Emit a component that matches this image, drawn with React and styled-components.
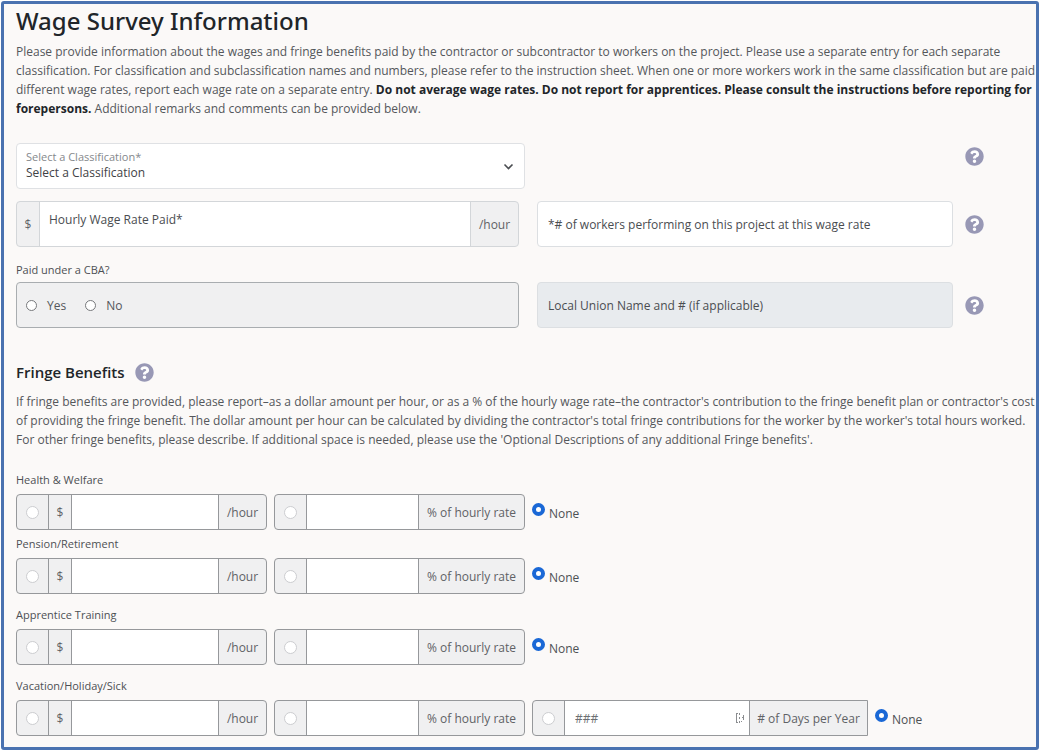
import React, { useState } from "react";
import styled, { createGlobalStyle } from "styled-components";
import { FaQuestionCircle } from "react-icons/fa";

const GlobalStyle = createGlobalStyle`
  * {
    box-sizing: border-box;
  }
  body {
    margin: 0;
    background: #fff;
    color: #54575b;
    font-family: "Open Sans", "Noto Sans", sans-serif;
    font-size: 12px;
    line-height: 19px;
  }
  input, select, button {
    font: inherit;
    color: inherit;
  }
`;

const Page = styled.main`
  margin: 1px;
  padding: 1px 3px 11px 12px;
  border: 3px solid #4a72b0;
  border-radius: 3px;
  background: #fbf9f8;
`;

const Title = styled.h1`
  margin: 0;
  color: #212529;
  font-family: "Noto Sans", sans-serif;
  font-size: 24px;
  font-weight: 500;
  line-height: 32px;
`;

const Text = styled.p`
  margin: ${(props) => (props.$spaced ? "9px" : "5px")} -4px 0 0;

  b {
    color: #212529;
  }
`;

const Section = styled.div`
  display: flex;
  flex-direction: column;
  margin-top: 25px;
`;

const FormRow = styled.div`
  display: grid;
  grid-template-columns: ${(props) => (props.$wide ? "509fr 490fr" : "503fr 496fr")};
  gap: 18px;
  align-items: ${(props) => (props.$wide ? "start" : "center")};
  margin-bottom: 12px;
`;

const RightCell = styled.div`
  display: flex;
  align-items: center;
  justify-content: flex-end;
  gap: 12px;
  padding-top: ${(props) => (props.$top ? "4px" : "0")};
`;

const HelpSlot = styled.div`
  display: flex;
  flex: none;
  width: 68px;
`;

const HelpButton = styled.button`
  display: flex;
  padding: 0;
  border: 0;
  border-radius: 50%;
  background: #fff;
  color: #9898b5;
  font-size: 19px;
  cursor: pointer;
`;

const SelectBox = styled.div`
  position: relative;
  display: flex;
`;

const FloatingLabel = styled.label`
  position: absolute;
  top: 6px;
  left: 10px;
  color: #85888c;
  font-size: 11px;
  line-height: 16px;
`;

const Select = styled.select`
  width: 100%;
  height: 46px;
  padding: 13px 30px 0 9px;
  border: 1px solid #dfe1e4;
  border-radius: 4px;
  background: #fff;
  color: #3f4246;
  appearance: none;
`;

const Chevron = styled.svg`
  position: absolute;
  top: 18px;
  right: 11px;
  pointer-events: none;
`;

const TextInput = styled.input`
  flex: 1;
  min-width: 0;
  height: 46px;
  padding: 0 10px;
  border: 1px solid #dcdfe2;
  border-radius: 4px;
  background: #fff;

  &:disabled {
    background: #e8ebee;
  }
  &::placeholder {
    color: #4a4d51;
    opacity: 1;
  }
`;

const Group = styled.div`
  display: flex;
  height: ${(props) => (props.$large ? "46px" : "36px")};
  border: 1px solid ${(props) => (props.$large ? "#d3d6d9" : "#96989b")};
  border-radius: ${(props) => (props.$square ? "4px 0 0 4px" : "4px")};
  background: #f0f0f1;
  overflow: hidden;

  && > * + * {
    border-left: 1px solid ${(props) => (props.$large ? "#d3d6d9" : "#96989b")};
  }
`;

const Addon = styled.span`
  display: flex;
  flex: none;
  align-items: center;
  justify-content: center;
  width: ${(props) => props.$width}px;
  color: #5f6266;
`;

const GroupInput = styled.input`
  flex: 1;
  width: 0;
  min-width: 0;
  padding: ${(props) => (props.$raised ? "0 9px 10px" : "0 10px")};
  border: 0;
  background: #fff;

  &::placeholder {
    color: ${(props) => (props.$raised ? "#4a4d51" : "#6c6f73")};
    opacity: 1;
  }
`;

const DaysBox = styled.span`
  display: flex;
  flex: 1;
  align-items: center;
  min-width: 0;
  padding-right: 4px;
  background: #fff;
`;

const DaysInput = styled(GroupInput)`
  align-self: stretch;
`;

const Radio = styled.input`
  appearance: none;
  flex: none;
  width: ${(props) => props.$size || 13}px;
  height: ${(props) => props.$size || 13}px;
  margin: 0;
  border: 1px solid ${(props) => props.$line || "#cccdd0"};
  border-radius: 50%;
  background: #fff;

  &:checked {
    border: 4px solid #1a68d6;
  }
`;

const SmallLabel = styled.div`
  color: #4d5054;
  font-size: 11px;
  font-weight: 500;
  line-height: 16px;
`;

const CbaBlock = styled.div`
  display: flex;
  flex-direction: column;
  gap: 4px;
  margin-top: 3px;
`;

const ChoiceBox = styled.div`
  display: flex;
  align-items: center;
  gap: 19px;
  height: 46px;
  padding: 0 9px;
  border: 1px solid #a9adb0;
  border-radius: 4px;
  background: #f0f0f1;
`;

const Choice = styled.label`
  display: flex;
  align-items: center;
  gap: 10px;
`;

const NoneChoice = styled.label`
  display: flex;
  align-items: flex-start;
  gap: 4px;
  padding-top: 9px;
  color: #4d5054;

  span {
    padding-top: 1px;
  }
`;

const SectionHead = styled.div`
  display: flex;
  align-items: center;
  gap: 10px;
  margin-top: 21px;
`;

const Subtitle = styled.h2`
  margin: 0;
  color: #212529;
  font-size: 15px;
  font-weight: 600;
  line-height: 22px;
`;

const FringeList = styled.div`
  padding-top: 10px;
`;

const Fringe = styled.div`
  margin-top: ${(props) => (props.$close ? "6px" : "13px")};
`;

const FringeRow = styled.div`
  display: grid;
  grid-template-columns: 251fr 251fr 336fr 158fr;
  gap: 7px;
  margin-top: 6px;
`;

const Help = ({ about }) => (
  <HelpButton type="button" aria-label={"Help: " + about}>
    <FaQuestionCircle />
  </HelpButton>
);

const DaysIcon = () => (
  <svg width="10" height="12" viewBox="0 0 10 12" fill="none" stroke="#8b8d90" aria-hidden="true">
    <path d="M1.5 1v10M1 1.5h2M1 10.5h2M4.5 1v2M4.5 5v2M4.5 9v2M6 9.5h1M8.5 3v5M7 5.5h2" />
  </svg>
);

const fringes = [
  { id: "health", label: "Health & Welfare" },
  { id: "pension", label: "Pension/Retirement", close: true },
  { id: "training", label: "Apprentice Training" },
  { id: "vacation", label: "Vacation/Holiday/Sick", days: true },
];

const FringeBenefit = ({ id, label, close, days }) => {
  const [kind, setKind] = useState("none");

  const radio = (value, props) => (
    <Radio
      type="radio"
      name={id}
      value={value}
      aria-label={label + " " + value}
      checked={kind === value}
      onChange={() => setKind(value)}
      {...props}
    />
  );

  return (
    <Fringe $close={close} role="group" aria-labelledby={id + "-label"}>
      <SmallLabel id={id + "-label"}>{label}</SmallLabel>
      <FringeRow>
        <Group>
          <Addon $width={31}>{radio("hour")}</Addon>
          <Addon $width={23}>$</Addon>
          <GroupInput type="text" aria-label={label + " dollars per hour"} />
          <Addon $width={48}>/hour</Addon>
        </Group>
        <Group>
          <Addon $width={31}>{radio("percent")}</Addon>
          <GroupInput type="text" aria-label={label + " percent of hourly rate"} />
          <Addon $width={106}>% of hourly rate</Addon>
        </Group>
        {days && (
          <Group $square>
            <Addon $width={31}>{radio("days")}</Addon>
            <DaysBox>
              <DaysInput type="text" placeholder="###" aria-label="Number of days per year" />
              <DaysIcon />
            </DaysBox>
            <Addon $width={118}># of Days per Year</Addon>
          </Group>
        )}
        <NoneChoice>
          {radio("none", { "aria-label": undefined })}
          <span>None</span>
        </NoneChoice>
      </FringeRow>
    </Fringe>
  );
};

export default function App() {
  return (
    <>
      <GlobalStyle />
      <Page>
        <Title>Wage Survey Information</Title>
        <Text>
          Please provide information about the wages and fringe benefits paid by the contractor or
          subcontractor to workers on the project. Please use a separate entry for each separate
          classification. For classification and subclassification names and numbers, please refer to
          the instruction sheet. When one or more workers work in the same classification but are paid
          different wage rates, report each wage rate on a separate entry.{" "}
          <b>
            Do not average wage rates. Do not report for apprentices. Please consult the instructions
            before reporting for forepersons.
          </b>{" "}
          Additional remarks and comments can be provided below.
        </Text>

        <Section>
          <FormRow $wide>
            <SelectBox>
              <FloatingLabel htmlFor="classification">Select a Classification*</FloatingLabel>
              <Select id="classification">
                <option>Select a Classification</option>
              </Select>
              <Chevron width="11" height="11" viewBox="0 0 11 11" fill="none" stroke="#4a4d51" strokeWidth="1.6">
                <path d="M1.5 3.5l4 4 4-4" />
              </Chevron>
            </SelectBox>
            <RightCell $top>
              <HelpSlot>
                <Help about="classification" />
              </HelpSlot>
            </RightCell>
          </FormRow>

          <FormRow>
            <Group $large>
              <Addon $width={22}>$</Addon>
              <GroupInput $raised type="text" placeholder="Hourly Wage Rate Paid*" aria-label="Hourly Wage Rate Paid" />
              <Addon $width={48}>/hour</Addon>
            </Group>
            <RightCell>
              <TextInput
                type="text"
                placeholder="*# of workers performing on this project at this wage rate"
                aria-label="Number of workers at this wage rate"
              />
              <HelpSlot>
                <Help about="number of workers" />
              </HelpSlot>
            </RightCell>
          </FormRow>

          <CbaBlock>
            <SmallLabel id="cba-label">Paid under a CBA?</SmallLabel>
            <FormRow>
              <ChoiceBox role="radiogroup" aria-labelledby="cba-label">
                <Choice>
                  <Radio type="radio" name="cba" $size={11} $line="#77797c" />
                  Yes
                </Choice>
                <Choice>
                  <Radio type="radio" name="cba" $size={11} $line="#77797c" />
                  No
                </Choice>
              </ChoiceBox>
              <RightCell>
                <TextInput
                  type="text"
                  disabled
                  placeholder="Local Union Name and # (if applicable)"
                  aria-label="Local Union Name and number"
                />
                <HelpSlot>
                  <Help about="local union" />
                </HelpSlot>
              </RightCell>
            </FormRow>
          </CbaBlock>
        </Section>

        <SectionHead>
          <Subtitle>Fringe Benefits</Subtitle>
          <Help about="fringe benefits" />
        </SectionHead>
        <Text $spaced>
          If fringe benefits are provided, please report–as a dollar amount per hour, or as a % of the
          hourly wage rate–the contractor's contribution to the fringe benefit plan or contractor's cost
          of providing the fringe benefit. The dollar amount per hour can be calculated by dividing the
          contractor's total fringe contributions for the worker by the worker's total hours worked. For
          other fringe benefits, please describe. If additional space is needed, please use the 'Optional
          Descriptions of any additional Fringe benefits'.
        </Text>

        <FringeList>
          {fringes.map((fringe) => (
            <FringeBenefit key={fringe.id} {...fringe} />
          ))}
        </FringeList>
      </Page>
    </>
  );
}
